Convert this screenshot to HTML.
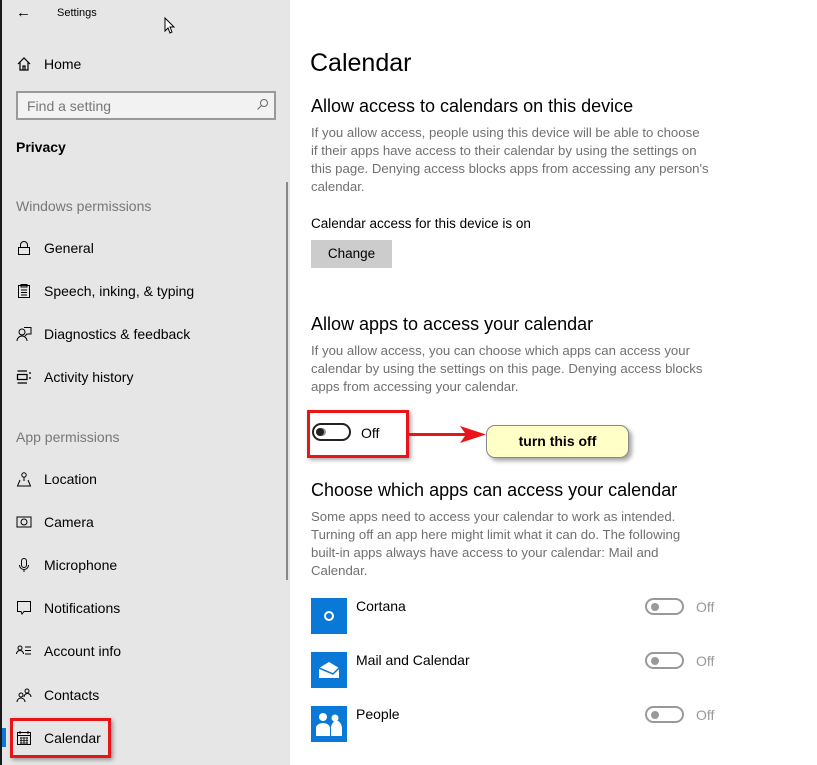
<!DOCTYPE html>
<html><head><meta charset="utf-8"><style>
*{margin:0;padding:0;box-sizing:border-box}
body{width:817px;height:765px;position:relative;overflow:hidden;background:#fff;font-family:"Liberation Sans",sans-serif;color:#000}
.a{position:absolute;white-space:nowrap}
#side{position:absolute;left:0;top:0;width:290px;height:765px;background:#e6e6e6}
#bd{position:absolute;left:0;top:0;width:2px;height:765px;background:#1a1a1a}
.it{position:absolute;left:44px;font-size:14px;line-height:16px}
.ic{position:absolute;left:16px;width:16px;height:16px}
.g{color:#777}
.p{position:absolute;left:311px;font-size:13.2px;line-height:18px;color:#707070;white-space:nowrap}
.h{position:absolute;left:311px;font-size:18px;color:#000;white-space:nowrap}
.tog{position:absolute;width:39px;height:17px;border:2px solid #999;border-radius:9px}
.tog:after{content:"";position:absolute;left:4px;top:3px;width:8px;height:8px;border-radius:50%;background:#999}
.app{position:absolute;left:311px;width:36px;height:36px;background:#0a78d7}
</style></head><body>
<div id="side">
<div class="a" style="left:16px;top:4px;font-size:15px">←</div>
<div class="a" style="left:57px;top:7px;font-size:11px">Settings</div>
<svg class="a" style="left:164px;top:17px" width="12" height="18"><path d="M1 1 L1 14 L4 11 L6 16 L8 15 L6 10 L10 10 Z" fill="#fff" stroke="#000"/></svg>
<svg class="ic" style="top:56px" viewBox="0 0 16 16"><path d="M2 8 L8 2 L14 8 M4 6 V14 H12 V6 M7 14 V10 H9 V14" fill="none" stroke="#000" stroke-width="1.2"/></svg>
<div class="it" style="top:56px">Home</div>
<div class="a" style="left:16px;top:91px;width:260px;height:29px;border:2px solid #999;background:#f2f2f2"></div>
<div class="a g" style="left:27px;top:98px;font-size:14px">Find a setting</div>
<svg class="a" style="left:256px;top:98px" width="13" height="13"><circle cx="8" cy="5" r="3.5" fill="none" stroke="#666"/><path d="M5.5 7.5 L1.5 11.5" stroke="#666"/></svg>
<div class="it" style="left:16px;top:139px;font-weight:bold">Privacy</div>
<div class="a" style="left:286px;top:182px;width:2px;height:398px;background:#888"></div>
<div class="it g" style="left:16px;top:198px">Windows permissions</div>
<svg class="ic" style="top:240px" viewBox="0 0 16 16"><rect x="2.5" y="7.5" width="11" height="7" fill="none" stroke="#000"/><path d="M4.5 7.5 V5 a3.5 3.5 0 0 1 7 0 V7.5" fill="none" stroke="#000"/></svg>
<div class="it" style="top:240px">General</div>
<svg class="ic" style="top:283px" viewBox="0 0 16 16"><rect x="2.5" y="2.5" width="11" height="12" fill="none" stroke="#000"/><path d="M5 1.5 H11 V4 H5Z M5 7 H11 M5 9.5 H11 M5 12 H11" fill="none" stroke="#000"/></svg>
<div class="it" style="top:283px">Speech, inking, &amp; typing</div>
<svg class="ic" style="top:326px" viewBox="0 0 16 16"><circle cx="6" cy="6" r="3" fill="none" stroke="#000"/><path d="M1 15 a5 5 0 0 1 10 0 M8 1.5 H15 V8 H11 L9 10" fill="none" stroke="#000"/></svg>
<div class="it" style="top:326px">Diagnostics &amp; feedback</div>
<svg class="ic" style="top:369px" viewBox="0 0 16 16"><path d="M1.5 2 H11 M1.5 14 H11 M1.5 5.5 H11 V10.5 H1.5Z M14 3 V5 M14 8 V10" fill="none" stroke="#000" stroke-width="1.3"/></svg>
<div class="it" style="top:369px">Activity history</div>
<div class="it g" style="left:16px;top:429px">App permissions</div>
<svg class="ic" style="top:471px" viewBox="0 0 16 16"><circle cx="8" cy="4" r="2.2" fill="none" stroke="#000"/><path d="M8 6.5 V10 M4 9 L1.5 15 H14.5 L12 9" fill="none" stroke="#000"/></svg>
<div class="it" style="top:471px">Location</div>
<svg class="ic" style="top:514px" viewBox="0 0 16 16"><rect x="1" y="3" width="14" height="10" fill="none" stroke="#000"/><circle cx="8" cy="8" r="3" fill="none" stroke="#000"/></svg>
<div class="it" style="top:514px">Camera</div>
<svg class="ic" style="top:557px" viewBox="0 0 16 16"><rect x="5.5" y="1.5" width="5" height="9" rx="2.5" fill="none" stroke="#000"/><path d="M3.5 8 a4.5 4.5 0 0 0 9 0 M8 12.5 V15" fill="none" stroke="#000"/></svg>
<div class="it" style="top:557px">Microphone</div>
<svg class="ic" style="top:600px" viewBox="0 0 16 16"><path d="M1.5 1.5 H14.5 V11.5 H8 L6 14 L5 11.5 H1.5Z" fill="none" stroke="#000"/></svg>
<div class="it" style="top:600px">Notifications</div>
<svg class="ic" style="top:643px" viewBox="0 0 16 16"><circle cx="4" cy="5" r="2" fill="none" stroke="#000"/><path d="M0.5 11 a3.5 3.5 0 0 1 7 0 M9 4 H15 M9 7.5 H15 M9 11 H15" fill="none" stroke="#000"/></svg>
<div class="it" style="top:643px">Account info</div>
<svg class="ic" style="top:687px" viewBox="0 0 16 16"><circle cx="5" cy="8" r="2" fill="none" stroke="#000"/><circle cx="11" cy="4" r="2" fill="none" stroke="#000"/><path d="M1 15 a4 4 0 0 1 8 0 M8 10 a3.5 3.5 0 0 1 7 0" fill="none" stroke="#000"/></svg>
<div class="it" style="top:687px">Contacts</div>
<div class="a" style="left:0;top:728px;width:6px;height:19px;background:#0a78d7"></div>
<svg class="ic" style="top:730px" viewBox="0 0 16 16"><rect x="1.5" y="2.5" width="13" height="12" fill="none" stroke="#000"/><path d="M1.5 5.5 H14.5 M4 1 V4 M12 1 V4" stroke="#000"/><path d="M4 8 H12 M4 10.5 H12 M4 13 H12 M5 7 V14 M8 7 V14 M11 7 V14" stroke="#000" stroke-width=".8"/></svg>
<div class="it" style="top:730px">Calendar</div>
<div class="a" style="left:10px;top:718px;width:101px;height:40px;border:3px solid #e8141a;box-shadow:2px 2px 4px rgba(0,0,0,.35)"></div>
</div>
<div id="bd"></div>

<div class="a" style="left:310px;top:49px;font-size:25px">Calendar</div>
<div class="h" style="top:96px">Allow access to calendars on this device</div>
<div class="p" style="top:124px">If you allow access, people using this device will be able to choose<br>if their apps have access to their calendar by using the settings on<br>this page. Denying access blocks apps from accessing any person's<br>calendar.</div>
<div class="a" style="left:311px;top:216px;font-size:13.5px">Calendar access for this device is on</div>
<div class="a" style="left:311px;top:240px;width:81px;height:28px;background:#ccc;font-size:13.5px;text-align:center;line-height:28px">Change</div>
<div class="h" style="top:314px">Allow apps to access your calendar</div>
<div class="p" style="top:342px">If you allow access, you can choose which apps can access your<br>calendar by using the settings on this page. Denying access blocks<br>apps from accessing your calendar.</div>
<div class="tog" style="left:312px;top:423px;border-color:#222;height:18px"></div>
<div class="a" style="left:316px;top:428px;width:8px;height:8px;border-radius:50%;background:#222"></div>
<div class="a" style="left:361px;top:425px;font-size:14px">Off</div>
<div class="a" style="left:307px;top:410px;width:102px;height:48px;border:3px solid #e8141a;box-shadow:2px 2px 4px rgba(0,0,0,.35)"></div>
<div class="a" style="left:409px;top:433px;width:62px;height:3px;background:#e8141a"></div>
<svg class="a" style="left:460px;top:426px" width="26" height="17"><path d="M0 0 L26 8.5 L0 17 L6 8.5Z" fill="#e8141a"/></svg>
<div class="a" style="left:486px;top:425px;width:143px;height:33px;background:#ffffc8;border:1px solid #888;border-radius:9px;box-shadow:3px 3px 4px rgba(0,0,0,.35);font-weight:bold;font-size:14px;text-align:center;line-height:31px">turn this off</div>
<div class="h" style="top:480px">Choose which apps can access your calendar</div>
<div class="p" style="top:508px">Some apps need to access your calendar to work as intended.<br>Turning off an app here might limit what it can do. The following<br>built-in apps always have access to your calendar: Mail and<br>Calendar.</div>

<div class="app" style="top:598px"><div class="a" style="left:13px;top:13px;width:10px;height:10px;border:2px solid #fff;border-radius:50%"></div></div>
<div class="a" style="left:356px;top:598px;font-size:14px">Cortana</div>
<div class="tog" style="left:645px;top:598px"></div><div class="a" style="left:696px;top:599px;font-size:14px;color:#999">Off</div>

<div class="app" style="top:652px"><svg width="36" height="36"><path d="M8 16 L18 10 L28 16 V26 H8Z" fill="#fff"/><path d="M8 16 L22 22 L28 16" fill="none" stroke="#0a78d7" stroke-width="1.5"/></svg></div>
<div class="a" style="left:356px;top:652px;font-size:14px">Mail and Calendar</div>
<div class="tog" style="left:645px;top:652px"></div><div class="a" style="left:696px;top:653px;font-size:14px;color:#999">Off</div>

<div class="app" style="top:706px"><svg width="36" height="36"><circle cx="12" cy="11" r="4" fill="#fff"/><circle cx="24" cy="12" r="3.5" fill="#fff"/><path d="M5 30 V22 a7 5 0 0 1 14 0 V30Z M20 30 V24 a4 6 0 0 1 11 -2 V30Z" fill="#fff"/></svg></div>
<div class="a" style="left:356px;top:706px;font-size:14px">People</div>
<div class="tog" style="left:645px;top:706px"></div><div class="a" style="left:696px;top:707px;font-size:14px;color:#999">Off</div>
</body></html>
